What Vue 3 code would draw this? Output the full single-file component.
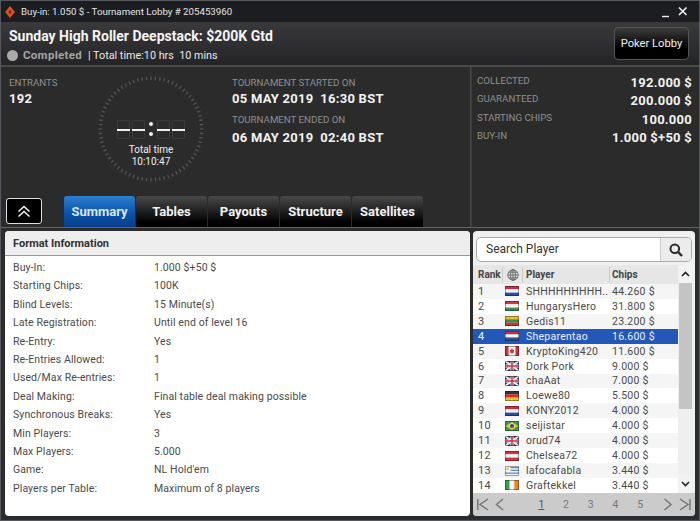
<script setup>
const ticks = Array.from({ length: 72 }, (_, i) => {
  const a = (i * 5 * Math.PI) / 180
  return {
    x1: 54 + 49 * Math.cos(a), y1: 54 + 49 * Math.sin(a),
    x2: 54 + 52.500 * Math.cos(a), y2: 54 + 52.500 * Math.sin(a),
  }
})
const format = [
  ['Buy-In:', '1.000 $+50 $'], ['Starting Chips:', '100K'], ['Blind Levels:', '15 Minute(s)'],
  ['Late Registration:', 'Until end of level 16'], ['Re-Entry:', 'Yes'], ['Re-Entries Allowed:', '1'],
  ['Used/Max Re-entries:', '1'], ['Deal Making:', 'Final table deal making possible'],
  ['Synchronous Breaks:', 'Yes'], ['Min Players:', '3'], ['Max Players:', '5.000'],
  ['Game:', "NL Hold'em"], ['Players per Table:', 'Maximum of 8 players'],
]
const players = [
  ['SHHHHHHHHH..', '44.260 $', 'nl'], ['HungarysHero', '31.800 $', 'hu'], ['Gedis11', '23.200 $', 'lt'],
  ['Sheparentao', '16.600 $', 'nl'], ['KryptoKing420', '11.600 $', 'ca'], ['Dork Pork', '9.000 $', 'uk'],
  ['chaAat', '7.000 $', 'uk'], ['Loewe80', '5.500 $', 'de'], ['KONY2012', '4.000 $', 'nl'],
  ['seijistar', '4.000 $', 'br'], ['orud74', '4.000 $', 'uk'], ['Chelsea72', '4.000 $', 'at'],
  ['lafocafabla', '3.440 $', 'uy'], ['Graftekkel', '3.440 $', 'ie'],
]
const stats = [
  ['COLLECTED', '192.000 $'], ['GUARANTEED', '200.000 $'], ['STARTING CHIPS', '100.000'], ['BUY-IN', '1.000 $+50 $'],
]
const tabs = ['Summary', 'Tables', 'Payouts', 'Structure', 'Satellites']
const stripes = {
  nl: ['#c8303c', '#f4f4f4', '#2f4f9e'], hu: ['#cc3a40', '#f4f4f4', '#3f8a50'],
  lt: ['#e8c030', '#3f8a50', '#c23a38'], de: ['#333333', '#cc3030', '#e8c030'],
  at: ['#cc3a40', '#f4f4f4', '#cc3a40'],
}
</script>

<template>
  <div class="window">
    <div class="titlebar">
      <svg class="logo" width="10" height="12" viewBox="0 0 10 12"><path d="M5 0 10 6 5 12 0 6Z" fill="#d9531e" /><path d="M5 4 6.600 6 5 8 3.400 6Z" fill="#5a2412" /></svg>
      <span class="title-text">Buy-in: 1.050 $ - Tournament Lobby # 205453960</span>
      <svg class="winbtns" width="30" height="12" viewBox="0 0 30 12"><path d="M2 10.500H9" stroke="#eee" stroke-width="1.400" /><path d="M19 1.500 26.500 9M26.500 1.500 19 9" stroke="#f2f2f2" stroke-width="1.600" /></svg>
    </div>

    <header class="header">
      <div>
        <h1>Sunday High Roller Deepstack: $200K Gtd</h1>
        <div class="status"><i class="dot"></i><b>Completed</b><span>| Total time:10 hrs&nbsp; 10 mins</span></div>
      </div>
      <button class="lobby">Poker Lobby</button>
    </header>

    <section class="stats">
      <div class="stats-left">
        <div class="top">
          <div class="entrants">
            <div class="label">ENTRANTS</div>
            <div class="value">192</div>
          </div>
          <div class="timer">
            <svg class="ring" width="108" height="108" viewBox="0 0 108 108">
              <line v-for="(t, i) in ticks" :key="i" :x1="t.x1" :y1="t.y1" :x2="t.x2" :y2="t.y2" stroke="#545454" stroke-width="1.300" />
            </svg>
            <div class="digits">
              <i class="d"></i><i class="d"></i><span class="colon"><em></em><em></em></span><i class="d"></i><i class="d"></i>
            </div>
            <div class="ttl">Total time</div>
            <div class="ttl">10:10:47</div>
          </div>
          <div class="dates">
            <div class="label">TOURNAMENT STARTED ON</div>
            <div class="value">05 MAY 2019&nbsp; 16:30 BST</div>
            <div class="label second">TOURNAMENT ENDED ON</div>
            <div class="value v2">06 MAY 2019&nbsp; 02:40 BST</div>
          </div>
        </div>
        <div class="tabbar">
          <button class="collapse" aria-label="collapse">
            <svg width="14" height="13" viewBox="0 0 14 13"><path d="M1.500 6.500 7 1.500 12.500 6.500M1.500 11.500 7 6.500 12.500 11.500" fill="none" stroke="#f2f2f2" stroke-width="1.600" /></svg>
          </button>
          <div class="tabs">
            <div v-for="(t, i) in tabs" :key="t" class="tab" :class="{ active: i === 0 }">{{ t }}</div>
          </div>
        </div>
      </div>
      <div class="stats-right">
        <div v-for="s in stats" :key="s[0]" class="stat-row">
          <span class="label">{{ s[0] }}</span><span class="value">{{ s[1] }}</span>
        </div>
      </div>
    </section>

    <main class="bottom">
      <section class="panel info">
        <div class="info-head">Format Information</div>
        <div class="info-body">
          <div v-for="r in format" :key="r[0]" class="info-row"><span>{{ r[0] }}</span><span>{{ r[1] }}</span></div>
        </div>
      </section>

      <section class="panel list">
        <div class="search">
          <span class="search-text">Search Player</span>
          <span class="search-btn">
            <svg width="14" height="14" viewBox="0 0 14 14"><circle cx="5.800" cy="5.800" r="4.300" fill="none" stroke="#2a2a2a" stroke-width="2" /><path d="M9 9 13 13" stroke="#2a2a2a" stroke-width="2.400" /></svg>
          </span>
        </div>
        <div class="table-wrap">
          <div class="table">
            <div class="thead">
              <span class="c-rank">Rank</span>
              <span class="c-flag">
                <svg width="12" height="12" viewBox="0 0 12 12" fill="none" stroke="#555" stroke-width=".8"><circle cx="6" cy="6" r="5.200" /><ellipse cx="6" cy="6" rx="2.400" ry="5.200" /><path d="M.8 6H11.200M1.600 3.200H10.400M1.600 8.800H10.400M6 .8V11.200" /></svg>
              </span>
              <span class="c-name">Player</span>
              <span class="c-chips">Chips</span>
            </div>
            <div v-for="(p, i) in players" :key="i" class="row" :class="{ odd: i % 2 === 0, sel: i === 3 }">
              <span class="c-rank">{{ i + 1 }}</span>
              <span class="c-flag">
                <svg width="14" height="10" viewBox="0 0 14 10" class="flag">
                  <template v-if="stripes[p[2]]">
                    <rect width="14" height="3.400" :fill="stripes[p[2]][0]" />
                    <rect y="3.300" width="14" height="3.400" :fill="stripes[p[2]][1]" />
                    <rect y="6.600" width="14" height="3.400" :fill="stripes[p[2]][2]" />
                  </template>
                  <template v-else-if="p[2] === 'ca'">
                    <rect width="14" height="10" fill="#f4f4f4" /><rect width="3.500" height="10" fill="#cc3030" /><rect x="10.500" width="3.500" height="10" fill="#cc3030" /><path d="M7 2 8 4 9.200 3.800 8.600 6 9 6.600 7.300 7V8H6.700V7L5 6.600 5.400 6 4.800 3.800 6 4Z" fill="#cc3030" />
                  </template>
                  <template v-else-if="p[2] === 'uk'">
                    <rect width="14" height="10" fill="#3b4a86" /><path d="M0 0 14 10M14 0 0 10" stroke="#f4f4f4" stroke-width="1.800" /><path d="M7 0V10M0 5H14" stroke="#f4f4f4" stroke-width="3" /><path d="M7 0V10M0 5H14" stroke="#c8303c" stroke-width="1.500" />
                  </template>
                  <template v-else-if="p[2] === 'br'">
                    <rect width="14" height="10" fill="#3f9a50" /><path d="M7 1 13 5 7 9 1 5Z" fill="#e8d040" /><circle cx="7" cy="5" r="2" fill="#2f4f9e" />
                  </template>
                  <template v-else-if="p[2] === 'uy'">
                    <rect width="14" height="10" fill="#f4f4f4" /><path d="M0 1.600H14M0 4.400H14M0 7.200H14" stroke="#5a8cc8" stroke-width="1.300" /><rect width="5.500" height="5.500" fill="#f4f4f4" /><circle cx="2.700" cy="2.700" r="1.300" fill="#e8c030" />
                  </template>
                  <template v-else>
                    <rect width="4.700" height="10" fill="#3f9a50" /><rect x="4.700" width="4.700" height="10" fill="#f4f4f4" /><rect x="9.300" width="4.700" height="10" fill="#e8852c" />
                  </template>
                  <rect x=".5" y=".5" width="13" height="9" fill="none" stroke="#000" stroke-opacity=".35" />
                </svg>
              </span>
              <span class="c-name">{{ p[0] }}</span>
              <span class="c-chips">{{ p[1] }}</span>
            </div>
          </div>
          <div class="scroll">
            <span class="s-btn"><svg width="9" height="6" viewBox="0 0 9 6"><path d="M1 5 4.500 1.500 8 5" fill="none" stroke="#222" stroke-width="1.600" /></svg></span>
            <div class="s-track"><div class="s-thumb"></div></div>
            <span class="s-btn"><svg width="9" height="6" viewBox="0 0 9 6"><path d="M1 1 4.500 4.500 8 1" fill="none" stroke="#222" stroke-width="1.600" /></svg></span>
          </div>
        </div>
        <div class="pager">
          <svg width="34" height="13" viewBox="0 0 34 13" fill="none" stroke="#777" stroke-width="1.500"><path d="M.8 1V12M11 1 3 6.500 11 12M26 1 19.500 6.500 26 12" /></svg>
          <div class="pages"><span class="cur">1</span><span>2</span><span>3</span><span>4</span><span>5</span></div>
          <svg width="34" height="13" viewBox="0 0 34 13" fill="none" stroke="#777" stroke-width="1.500"><path d="M6.500 1 13 6.500 6.500 12M22 1 30 6.500 22 12M32 1V12" /></svg>
        </div>
      </section>
    </main>
  </div>
</template>

<style scoped>
.window { width: 700px; height: 521px; box-sizing: border-box; border: 1px solid #55585c; background: #2b2b2b; display: flex; flex-direction: column; font-family: Roboto, "Liberation Sans", sans-serif; overflow: hidden; color: #ddd; }
.titlebar { height: 21px; flex: none; background: #1c1d21; display: flex; align-items: center; padding: 0 9px 0 4px; font-size: 9.700px; color: #e4e4e4; }
.logo { margin-right: 6px; }
.title-text { flex: 1; }
.header { height: 45px; flex: none; box-sizing: border-box; background: linear-gradient(#3a3a3c, #242426); border-bottom: 2px solid #4a4a4a; display: flex; justify-content: space-between; align-items: center; padding: 0 10px 0 8px; }
h1 { margin: 2px 0 1px; font-size: 14px; line-height: 20px; font-weight: 700; color: #f4f4f4; }
.status { display: flex; align-items: center; font-size: 10.800px; color: #e8e8e8; height: 17px; }
.dot { width: 11px; height: 11px; border-radius: 50%; background: #a9a9a9; margin: 0 5px 0 -2px; }
.status b { color: #a5a5a5; font-size: 11.500px; font-weight: 700; margin-right: 6px; letter-spacing: .3px; }
.lobby { width: 75px; height: 33px; border: 1px solid #555; border-radius: 4px; background: linear-gradient(#3c3c3c, #000 65%); color: #eee; font: 11.200px Roboto, sans-serif; padding: 0; }
.stats { height: 160px; flex: none; display: flex; }
.stats-left { width: 470px; flex: none; display: flex; flex-direction: column; justify-content: space-between; border-right: 1px solid #484848; box-sizing: border-box; }
.stats-right { flex: 1; padding: 7px 7px 0 5px; border-left: 1px solid #3a3a3a; }
.top { display: flex; padding: 10px 0 0 8px; }
.label { font-size: 9.700px; color: #8f8f8f; line-height: 12px; }
.value { color: #f2f2f2; font-size: 13px; font-weight: 700; line-height: 16px; margin-top: 2px; letter-spacing: .25px; }
.value.v2 { margin-top: 4px; }
.entrants { width: 88px; }
.timer { width: 108px; height: 108px; margin-top: -2px; position: relative; display: flex; flex-direction: column; align-items: center; padding-top: 44px; box-sizing: border-box; }
.ring { position: absolute; left: 0; top: 0; }
.digits { display: flex; align-items: center; gap: 2px; height: 20px; }
.d { width: 13px; height: 19px; box-sizing: border-box; border: 1px solid #3a3a3a; position: relative; border-radius: 1px; }
.d::after { content: ""; position: absolute; left: -1px; right: -1px; top: 8px; height: 2.500px; background: #f0f0f0; }
.colon { display: flex; flex-direction: column; gap: 6px; margin: 0 2px; }
.colon em { width: 4px; height: 4px; border-radius: 50%; background: #f0f0f0; }
.ttl { font-size: 10px; line-height: 12px; color: #eee; position: relative; }
.digits + .ttl { margin-top: 5px; }
.dates { margin-left: 27px; }
.second { margin-top: 7px; }
.tabbar { display: flex; align-items: flex-end; padding: 0 0 0 5px; }
.collapse { width: 36px; height: 26px; border: 1px solid #ddd; border-radius: 3px; background: #000; margin: 0 22px 3px 0; padding: 0; display: flex; align-items: center; justify-content: center; }
.tabs { display: flex; gap: 1px; }
.tab { width: 71px; height: 31px; box-sizing: border-box; border-radius: 3px 3px 0 0; background: linear-gradient(#4a4a4a, #000 85%); color: #f2f2f2; font-size: 13px; font-weight: 700; display: flex; align-items: center; justify-content: center; }
.tab.active { background: linear-gradient(#2a7fd0, #0a4fa8 60%, #083f8c); color: #d8e8ff; }
.stat-row { display: flex; justify-content: space-between; height: 18.400px; align-items: flex-start; }
.stat-row .label { line-height: 14px; }
.stat-row .value { margin-top: 1px; font-size: 13px; line-height: 16px; }
.bottom { flex: 1; min-height: 0; border-top: 1px solid #2a6fb8; background: #2c2c2c; display: flex; gap: 3px; padding: 3px 4px 4px 4px; }
.panel { background: #fff; border-radius: 4px; box-sizing: border-box; color: #444; }
.info { width: 465px; flex: none; }
.info-head { height: 25px; box-sizing: border-box; background: #eeeeee; border-bottom: 1px solid #999; border-radius: 4px 4px 0 0; padding-left: 8px; font-size: 11px; font-weight: 700; line-height: 25px; color: #333; }
.info-body { padding: 3px 8px; }
.info-row { display: grid; grid-template-columns: 141px 1fr; height: 18.400px; line-height: 18.400px; font-size: 10.500px; color: #4a4a4a; letter-spacing: .1px; }
.list { flex: 1; display: flex; flex-direction: column; padding: 6px 0 0 0; background: #f0f0f0; overflow: hidden; }
.search { height: 25px; flex: none; margin: 0 3px; box-sizing: border-box; border: 1px solid #aaa; border-radius: 5px; background: #fff; display: flex; justify-content: space-between; }
.search-text { font-size: 12px; line-height: 23px; padding-left: 9px; color: #333; }
.search-btn { width: 30px; background: #ececec; border-left: 1px solid #ccc; border-radius: 0 4px 4px 0; display: flex; align-items: center; justify-content: center; }
.table-wrap { display: flex; margin: 3px 3px 0 0; flex: 1; min-height: 0; background: #fff; }
.table { width: 205px; flex: none; }
.thead { height: 19px; background: #e6e6e6; display: flex; align-items: center; font-size: 10px; font-weight: 700; color: #444; }
.thead .c-flag, .thead .c-name { border-left: 1px solid #ccc; height: 15px; display: flex; align-items: center; }
.thead .c-chips { border-left: 1px solid #ccc; height: 15px; line-height: 15px; padding-left: 2px; }
.thead .c-name { padding-left: 3px; }
.c-rank { width: 29px; padding-left: 5px; box-sizing: border-box; flex: none; }
.c-flag { width: 19px; flex: none; display: flex; align-items: center; justify-content: center; }
.c-name { width: 87px; flex: none; padding-left: 4px; box-sizing: border-box; overflow: hidden; white-space: nowrap; }
.c-chips { padding-left: 3px; }
.row { height: 14.930px; display: flex; align-items: center; font-size: 10.500px; color: #4a4a4a; letter-spacing: .25px; background: #fff; }
.row .c-rank { font-size: 11px; padding-left: 5px; }
.row .c-name { padding-left: 5px; width: 87px; }
.row .c-chips { padding-left: 4px; }
.row.odd { background: #f5f5f5; }
.row.sel { background: #2358b8; color: #eef; }
.flag { display: block; }
.scroll { flex: 1; display: flex; flex-direction: column; background: #efefef; }
.s-btn { height: 18px; display: flex; align-items: center; justify-content: center; background: #f2f2f2; flex: none; }
.s-track { flex: 1; }
.s-thumb { height: 126px; margin-left: 1px; background: #c4c4c4; }
.pager { height: 23px; flex: none; background: #cbcbcb; display: flex; align-items: center; padding: 0 3px 0 4px; }
.pages { flex: 1; display: flex; font-size: 10.500px; color: #777; padding-left: 18px; }
.pages span { width: 24.700px; text-align: center; }
.pages .cur { text-decoration: underline; color: #555; }
</style>
